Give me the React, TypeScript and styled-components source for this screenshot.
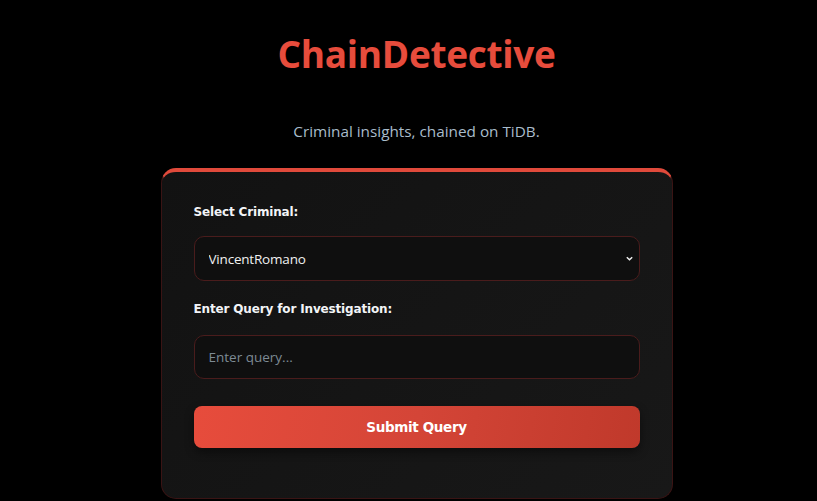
import React from "react";
import styled, { createGlobalStyle } from "styled-components";

const GlobalStyle = createGlobalStyle`
  html, body {
    margin: 0;
    padding: 0;
    background: #000000;
  }
  body {
    font-family: "Open Sans", "Noto Sans", sans-serif;
  }
`;

const Page = styled.div`
  min-height: 501px;
  padding: 0 0 0 16px;
  display: flex;
  flex-direction: column;
  align-items: center;
`;

const Title = styled.h1`
  margin: 27px 0 0;
  font-family: "Open Sans", "Noto Sans", sans-serif;
  font-size: 37px;
  line-height: 54px;
  font-weight: 700;
  color: #e74c3c;
  letter-spacing: -0.3px;
`;

const Subtitle = styled.p`
  margin: 40px 0 0;
  font-family: "Open Sans", "Noto Sans", sans-serif;
  font-size: 15.3px;
  line-height: 20px;
  color: #a9bccb;
`;

const Card = styled.form`
  margin-top: 27px;
  width: 512px;
  box-sizing: border-box;
  padding: 30px 32px 50px;
  background: linear-gradient(135deg, #121212 0%, #181818 100%);
  border: 1px solid #3a1414;
  border-top: 4px solid #e04a3b;
  border-radius: 15px;
  box-shadow: 0 6px 20px rgba(0, 0, 0, 0.6);
  display: flex;
  flex-direction: column;
`;

const Label = styled.label<{ $top?: number }>`
  margin-top: ${(p) => p.$top ?? 0}px;
  font-family: "DejaVu Sans", Verdana, sans-serif;
  font-size: 12px;
  line-height: 20px;
  font-weight: 700;
  color: #f2f4f7;
  letter-spacing: -0.15px;
`;

const fieldBase = `
  box-sizing: border-box;
  width: 100%;
  border: 1px solid #4a1c1c;
  border-radius: 10px;
  background: #0f0f0f;
  font-family: "Open Sans", "Noto Sans", sans-serif;
  font-size: 13.5px;
  padding: 0 14px;
  outline: none;
`;

const SelectWrap = styled.div`
  position: relative;
  width: 100%;
`;

const Select = styled.select`
  ${fieldBase}
  height: 45px;
  margin-top: 14px;
  color: #f0f0f0;
  letter-spacing: -0.2px;
  appearance: none;
  -webkit-appearance: none;
`;

const Chevron = styled.svg`
  position: absolute;
  right: 6px;
  top: 32px;
  width: 9px;
  height: 9px;
  pointer-events: none;
`;

const Input = styled.input`
  ${fieldBase}
  height: 44px;
  margin-top: 16px;
  color: #f0f0f0;
  &::placeholder {
    color: #7d8a94;
  }
`;

const Button = styled.button`
  margin-top: 27px;
  height: 42px;
  width: 100%;
  border: none;
  border-radius: 8px;
  background: linear-gradient(100deg, #e74c3c 0%, #d44537 50%, #c0392b 100%);
  color: #ffffff;
  font-family: "DejaVu Sans", Verdana, sans-serif;
  font-size: 13.5px;
  font-weight: 700;
  letter-spacing: -0.35px;
  box-shadow: 0 4px 10px rgba(0, 0, 0, 0.45);
  cursor: pointer;
`;

const App: React.FC = () => {
  return (
    <>
      <GlobalStyle />
      <Page>
        <Title>ChainDetective</Title>
        <Subtitle>Criminal insights, chained on TiDB.</Subtitle>
        <Card onSubmit={(e) => e.preventDefault()}>
          <Label>Select Criminal:</Label>
          <SelectWrap>
            <Select defaultValue="VincentRomano">
              <option value="VincentRomano">VincentRomano</option>
            </Select>
            <Chevron viewBox="0 0 10 10">
              <path d="M2 3.5 L5 6.5 L8 3.5" fill="none" stroke="#f0f0f0" strokeWidth="1.6" />
            </Chevron>
          </SelectWrap>
          <Label $top={18}>Enter Query for Investigation:</Label>
          <Input placeholder="Enter query..." />
          <Button type="submit">Submit Query</Button>
        </Card>
      </Page>
    </>
  );
};

export default App;
